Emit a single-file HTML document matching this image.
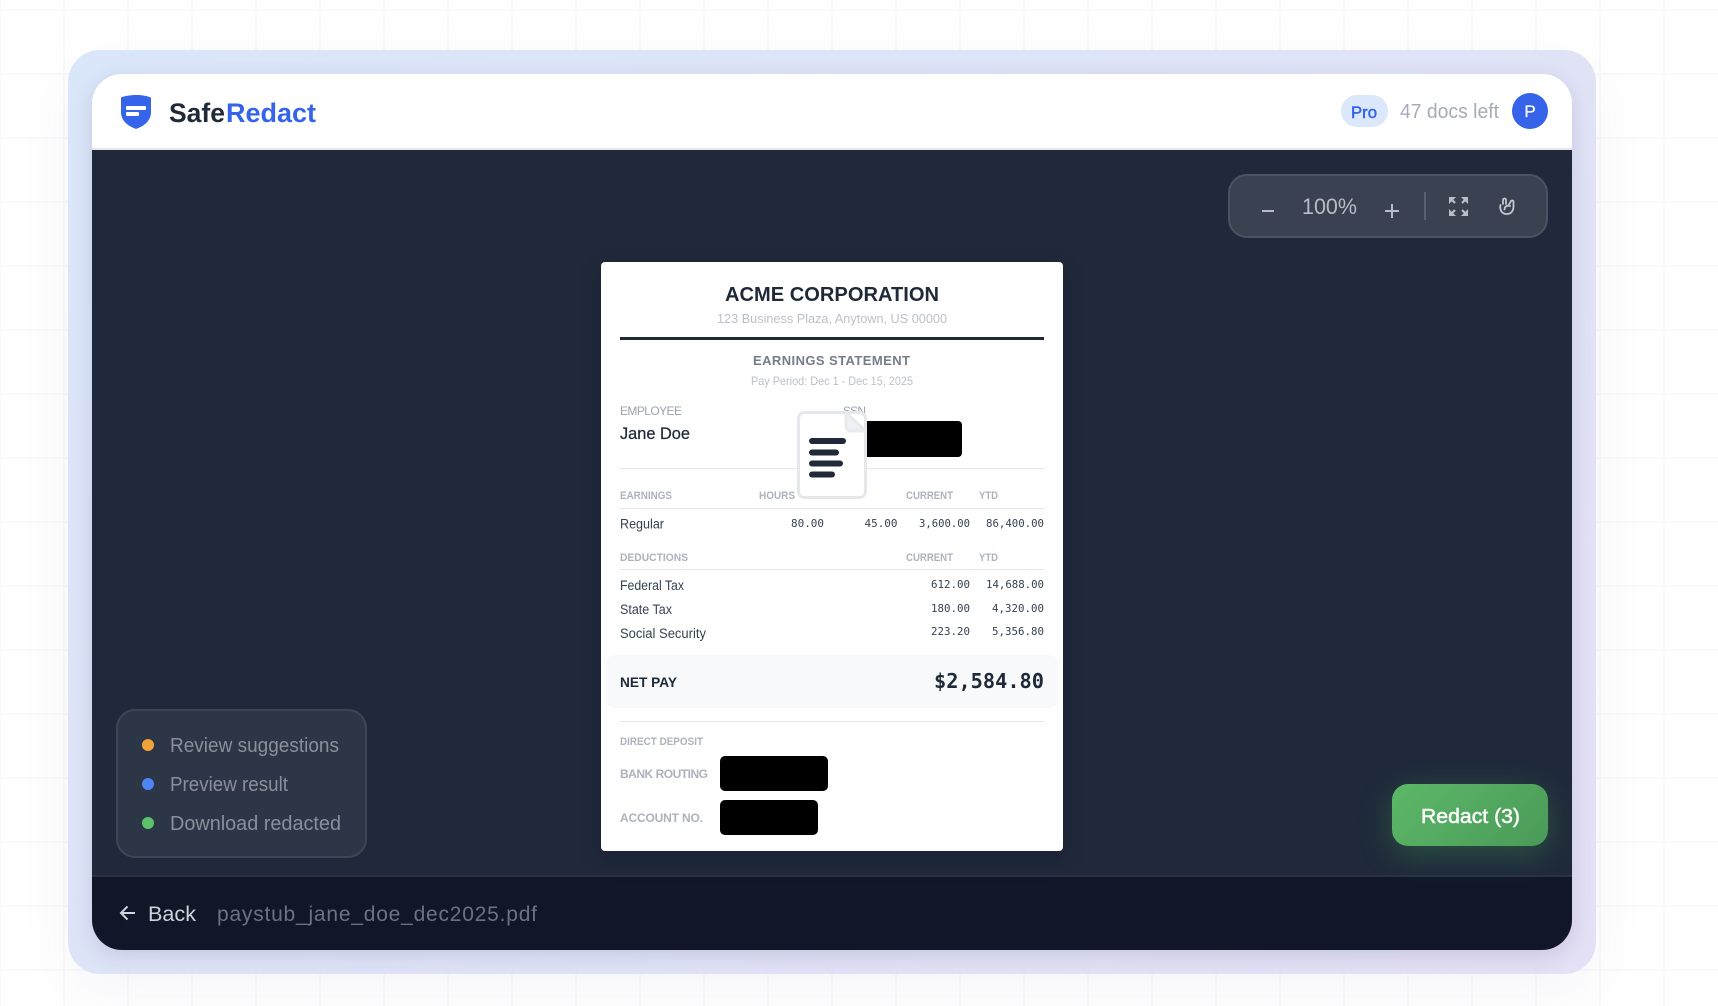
<!DOCTYPE html>
<html lang="en"><head><meta charset="utf-8"><title>SafeRedact</title>
<style>
html,body{margin:0;padding:0;width:1718px;height:1006px;overflow:hidden;background:#fff}
#bg{position:absolute;left:0;top:0;width:1718px;height:1006px;background-color:#fff;background-image:linear-gradient(#f9f9fb 0,#f9f9fb 2px,transparent 2px),linear-gradient(90deg,#f9f9fb 0,#f9f9fb 2px,transparent 2px);background-size:64px 64px;background-position:0 9px,-1px 0}
#frame{position:absolute;left:68px;top:50px;width:1528px;height:924px;border-radius:32px;background:linear-gradient(135deg,#dae6f9,#e4e0f5);box-shadow:0 20px 60px rgba(80,70,140,.05)}
#card{position:absolute;left:92px;top:74px;width:1480px;height:876px;border-radius:30px;overflow:hidden;background:#fff;box-shadow:0 6px 20px rgba(50,50,100,.14)}
#head{position:absolute;left:0;top:0;width:1480px;height:74px;background:#fff;border-bottom:2px solid #e5e7eb}
#main{position:absolute;left:0;top:76px;width:1480px;height:725px;background:#1f293b}
#foot{position:absolute;left:0;top:801px;width:1480px;height:75px;background:#111729;border-top:2px solid #2a3240;box-sizing:border-box}
#btn{position:absolute;left:1300px;top:710px;width:156px;height:62px;border-radius:16px;background:linear-gradient(135deg,#5cb868,#4a9a58);box-shadow:0 8px 32px rgba(76,175,80,.32)}
#doc{position:absolute;left:601px;top:262px;width:462px;height:589px;background:#fff;border-radius:4px;box-shadow:0 8px 24px rgba(0,0,0,.18)}
svg{position:absolute;left:0;top:0}
text{font-family:"Liberation Sans",sans-serif}
.m{font-family:"DejaVu Sans Mono","Liberation Mono",monospace;font-size:11px;fill:#374151}
.th{font-size:11px;font-weight:700;fill:#adb2bc}
.r{font-size:13.5px;fill:#374151}
.l{font-size:20px;fill:#8a8f9a}
</style></head><body>
<div id="bg"></div>
<div id="frame"></div>
<div id="card"><div id="head"></div><div id="main"></div><div id="foot"></div><div id="btn"></div></div>
<div id="doc"></div>
<svg width="1718" height="1006" viewBox="0 0 1718 1006" xmlns="http://www.w3.org/2000/svg">
<!-- header -->
<path d="M136 95C130 95 125 96 121 97.5V112C121 121 128 126 136 129C144 126 151 121 151 112V97.5C147 96 142 95 136 95Z" fill="#3563e9"/>
<rect x="126" y="106" width="20" height="4" rx="1" fill="#fff"/><rect x="126" y="112" width="13" height="4" rx="1" fill="#fff"/>
<text x="169" y="122" font-size="27" font-weight="700" fill="#1f2937" textLength="56" lengthAdjust="spacingAndGlyphs">Safe</text>
<text x="226" y="122" font-size="27" font-weight="700" fill="#3563e9" textLength="90" lengthAdjust="spacingAndGlyphs">Redact</text>
<rect x="1341" y="95" width="47" height="32" rx="16" fill="#dbe7fb"/>
<text x="1351" y="118" font-size="17" fill="#3563e9" stroke="#3563e9" stroke-width=".5" textLength="26" lengthAdjust="spacingAndGlyphs">Pro</text>
<text x="1400" y="118" font-size="20" fill="#a7abb8" textLength="99" lengthAdjust="spacingAndGlyphs">47 docs left</text>
<circle cx="1530" cy="111" r="18" fill="#3563e9"/>
<text x="1530" y="117" font-size="17" fill="#fff" stroke="#fff" stroke-width=".3" text-anchor="middle">P</text>
<!-- toolbar -->
<rect x="1229" y="175" width="318" height="62" rx="18" fill="#3a4150" stroke="#4b5260" stroke-width="2"/>
<rect x="1262" y="210" width="12" height="2" fill="#b8bcc5"/>
<text x="1302" y="214" font-size="22" fill="#b8bcc5" textLength="55" lengthAdjust="spacingAndGlyphs">100%</text>
<path d="M1392 204v14M1385 211h14" stroke="#b8bcc5" stroke-width="2" fill="none"/>
<rect x="1424" y="192" width="2" height="28" fill="#5a606d"/>
<g fill="none" stroke="#b9bdc6" stroke-width="2.200">
<path d="M1450 198l5 5M1467 198l-5 5M1450 215l5-5M1467 215l-5-5"/>
</g>
<g fill="#b9bdc6">
<path d="M1449 197h7l-7 7zM1468 197h-7l7 7zM1449 216h7l-7-7zM1468 216h-7l7-7z"/>
</g>
<path d="M1500.500 205C1499.500 210 1502 214 1506.500 214C1511 214 1513.500 211 1513.500 206V202C1513.500 200 1511 200 1510.500 202L1509 204.500M1503 204V200C1503 198 1506 198 1506 200V204M1510 206C1507 205 1504.500 206.500 1504.500 209.500" fill="none" stroke="#c4c8d0" stroke-width="1.800" stroke-linecap="round" stroke-linejoin="round"/>
<!-- document -->
<text x="725" y="301" font-size="20.5" font-weight="700" fill="#1f2937" textLength="214" lengthAdjust="spacingAndGlyphs">ACME CORPORATION</text>
<text x="717" y="323" font-size="13" fill="#bcc0c9" textLength="230" lengthAdjust="spacingAndGlyphs">123 Business Plaza, Anytown, US 00000</text>
<rect x="620" y="337" width="424" height="3" fill="#1f2937"/>
<text x="753" y="365" font-size="13" font-weight="700" fill="#767c8a" textLength="157" lengthAdjust="spacing">EARNINGS STATEMENT</text>
<text x="751" y="385" font-size="12" fill="#bcc0c9" textLength="162" lengthAdjust="spacingAndGlyphs">Pay Period: Dec 1 - Dec 15, 2025</text>
<text x="620" y="415" font-size="12" fill="#9ca3af" textLength="62" lengthAdjust="spacing">EMPLOYEE</text>
<text x="620" y="439" font-size="17" fill="#1f2937" stroke="#1f2937" stroke-width=".25" textLength="70" lengthAdjust="spacingAndGlyphs">Jane Doe</text>
<text x="843" y="415" font-size="12" fill="#9ca3af" textLength="23" lengthAdjust="spacing">SSN</text>
<rect x="843" y="421" width="119" height="36" rx="4" fill="#000"/>
<rect x="620" y="468" width="424" height="1" fill="#e5e7eb"/>
<text class="th" x="620" y="499" textLength="52" lengthAdjust="spacingAndGlyphs">EARNINGS</text>
<text class="th" x="759" y="499" textLength="36" lengthAdjust="spacingAndGlyphs">HOURS</text>
<text class="th" x="906" y="499" textLength="47" lengthAdjust="spacingAndGlyphs">CURRENT</text>
<text class="th" x="979" y="499" textLength="19" lengthAdjust="spacingAndGlyphs">YTD</text>
<rect x="620" y="508" width="424" height="1" fill="#e5e7eb"/>
<text class="r" x="620" y="528.500" textLength="44" lengthAdjust="spacingAndGlyphs">Regular</text>
<text class="m" x="791" y="527" textLength="33" lengthAdjust="spacingAndGlyphs">80.00</text>
<text class="m" x="864.500" y="527" textLength="33" lengthAdjust="spacingAndGlyphs">45.00</text>
<text class="m" x="919" y="527" textLength="51" lengthAdjust="spacingAndGlyphs">3,600.00</text>
<text class="m" x="986" y="527" textLength="58" lengthAdjust="spacingAndGlyphs">86,400.00</text>
<text class="th" x="620" y="561" textLength="68" lengthAdjust="spacingAndGlyphs">DEDUCTIONS</text>
<text class="th" x="906" y="561" textLength="47" lengthAdjust="spacingAndGlyphs">CURRENT</text>
<text class="th" x="979" y="561" textLength="19" lengthAdjust="spacingAndGlyphs">YTD</text>
<rect x="620" y="569" width="424" height="1" fill="#e5e7eb"/>
<text class="r" x="620" y="590" textLength="64" lengthAdjust="spacingAndGlyphs">Federal Tax</text>
<text class="m" x="931" y="588" textLength="39" lengthAdjust="spacingAndGlyphs">612.00</text>
<text class="m" x="986" y="588" textLength="58" lengthAdjust="spacingAndGlyphs">14,688.00</text>
<text class="r" x="620" y="614" textLength="52" lengthAdjust="spacingAndGlyphs">State Tax</text>
<text class="m" x="931" y="612" textLength="39" lengthAdjust="spacingAndGlyphs">180.00</text>
<text class="m" x="992" y="612" textLength="52" lengthAdjust="spacingAndGlyphs">4,320.00</text>
<text class="r" x="620" y="638" textLength="86" lengthAdjust="spacingAndGlyphs">Social Security</text>
<text class="m" x="931" y="635" textLength="39" lengthAdjust="spacingAndGlyphs">223.20</text>
<text class="m" x="992" y="635" textLength="52" lengthAdjust="spacingAndGlyphs">5,356.80</text>
<rect x="606" y="655" width="452" height="53" rx="8" fill="#f8f9fb"/>
<text x="620" y="687" font-size="14" font-weight="700" fill="#1f2937" textLength="57" lengthAdjust="spacingAndGlyphs">NET PAY</text>
<text x="934" y="688" font-size="20" font-weight="700" fill="#1f2937" style="font-family:'DejaVu Sans Mono',monospace" textLength="110" lengthAdjust="spacingAndGlyphs">$2,584.80</text>
<rect x="620" y="721" width="424" height="1" fill="#e5e7eb"/>
<text class="th" x="620" y="745" textLength="83" lengthAdjust="spacingAndGlyphs">DIRECT DEPOSIT</text>
<text x="620" y="778" font-size="12" font-weight="700" fill="#adb2bc" textLength="88" lengthAdjust="spacing">BANK ROUTING</text>
<rect x="720" y="756" width="108" height="35" rx="5" fill="#000"/>
<text x="620" y="822" font-size="12" font-weight="700" fill="#adb2bc" textLength="83" lengthAdjust="spacing">ACCOUNT NO.</text>
<rect x="720" y="800" width="98" height="35" rx="5" fill="#000"/>
<!-- doc icon -->
<rect x="798.5" y="412.5" width="67" height="85" rx="6" fill="#fff" stroke="#e5e7eb" stroke-width="3"/>
<path d="M846 412.500V426a5 5 0 0 0 5 5H865.500Z" fill="#eff0f3" stroke="#e8eaed" stroke-width="3" stroke-linejoin="round"/>
<g fill="#1f2937"><rect x="809" y="438" width="37" height="6" rx="3"/><rect x="809" y="449.500" width="30" height="6" rx="3"/><rect x="809" y="460.500" width="34" height="6" rx="3"/><rect x="809" y="471.500" width="26" height="6" rx="3"/></g>
<!-- legend -->
<rect x="117" y="710" width="249" height="147" rx="18" fill="#2d3646" stroke="#3f4653" stroke-width="2"/>
<circle cx="148" cy="745" r="6" fill="#f0a33a"/><circle cx="148" cy="784" r="6" fill="#4f84f5"/><circle cx="148" cy="823" r="6" fill="#5cc46c"/>
<text class="l" x="170" y="752" textLength="169" lengthAdjust="spacingAndGlyphs">Review suggestions</text>
<text class="l" x="170" y="791" textLength="118" lengthAdjust="spacingAndGlyphs">Preview result</text>
<text class="l" x="170" y="830" textLength="171" lengthAdjust="spacingAndGlyphs">Download redacted</text>
<!-- footer -->
<path d="M135 913H121M127.500 906.500L121 913L127.500 919.500" fill="none" stroke="#d1d5db" stroke-width="2"/>
<text x="148" y="921" font-size="21" fill="#cfd2d8" textLength="48" lengthAdjust="spacingAndGlyphs">Back</text>
<text x="217" y="921" font-size="21" fill="#6b7280" textLength="320" lengthAdjust="spacing">paystub_jane_doe_dec2025.pdf</text>
<text x="1421" y="823" font-size="20.500" fill="#fff" stroke="#fff" stroke-width=".5" textLength="99" lengthAdjust="spacingAndGlyphs">Redact (3)</text>
</svg>
</body></html>
